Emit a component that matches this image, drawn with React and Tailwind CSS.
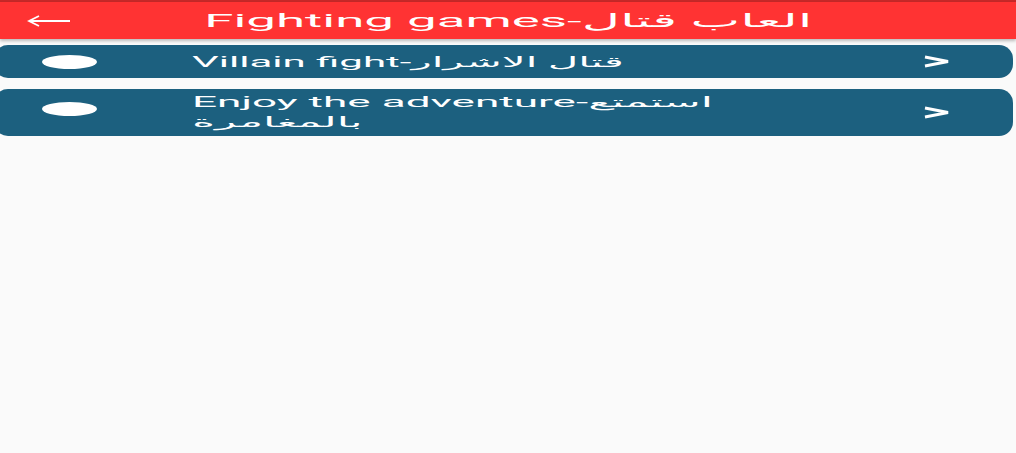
import React from "react";

const font = { fontFamily: 'Roboto, "DejaVu Sans", sans-serif' };

function Chevron() {
  return (
    <svg width="28" height="13" viewBox="0 0 28 13" className="shrink-0">
      <polyline points="2,2 25,6.5 2,11" fill="none" stroke="white" strokeWidth="3" strokeLinejoin="miter" />
    </svg>
  );
}

function Row({ children, tall }) {
  return (
    <div className={`ml-[-6px] mr-[3px] flex items-center rounded-[14px] bg-[#1c607f] ${tall ? "h-[47px]" : "h-[33px]"}`}>
      <div className={`ml-[48px] h-[14px] w-[55px] shrink-0 rounded-[50%] bg-white ${tall ? "mb-2" : ""}`} />
      <div className="ml-[95px] flex-1 text-white">{children}</div>
      <div className="mr-[62px]">
        <Chevron />
      </div>
    </div>
  );
}

export default function App() {
  return (
    <div className="h-[453px] w-[1016px] overflow-hidden bg-[#fafafa]" style={font}>
      <div className="h-[2px] bg-[#c62828]" />
      <div className="relative flex h-[37px] items-center bg-[#ff3333] shadow-[0_2px_3px_rgba(0,0,0,0.25)]">
        <svg width="44" height="12" viewBox="0 0 44 12" preserveAspectRatio="none" className="ml-[27px] shrink-0">
          <path d="M2 6 H43 M12 1 L2 6 L12 11" fill="none" stroke="white" strokeWidth="1.8" />
        </svg>
        <div className="flex flex-1 justify-center pr-[70px]">
          <span className="inline-block origin-center scale-x-[2.78] whitespace-nowrap text-[19px] leading-none text-white">
            Fighting games-العاب قتال
          </span>
        </div>
      </div>
      <div className="mt-[6px] flex flex-col gap-[11px]">
        <Row>
          <span className="inline-block origin-left scale-x-[3] whitespace-nowrap text-[14px] leading-none">
            Villain fight-قتال الاشرار
          </span>
        </Row>
        <Row tall>
          <div className="flex flex-col gap-[4px] pb-[2px]">
            <span className="inline-block origin-left scale-x-[3.15] whitespace-nowrap text-[14px] leading-[16px]">
              Enjoy the adventure-استمتع
            </span>
            <span className="inline-block origin-left scale-x-[3.15] whitespace-nowrap text-[14px] leading-[16px]">
              بالمغامرة
            </span>
          </div>
        </Row>
      </div>
    </div>
  );
}
